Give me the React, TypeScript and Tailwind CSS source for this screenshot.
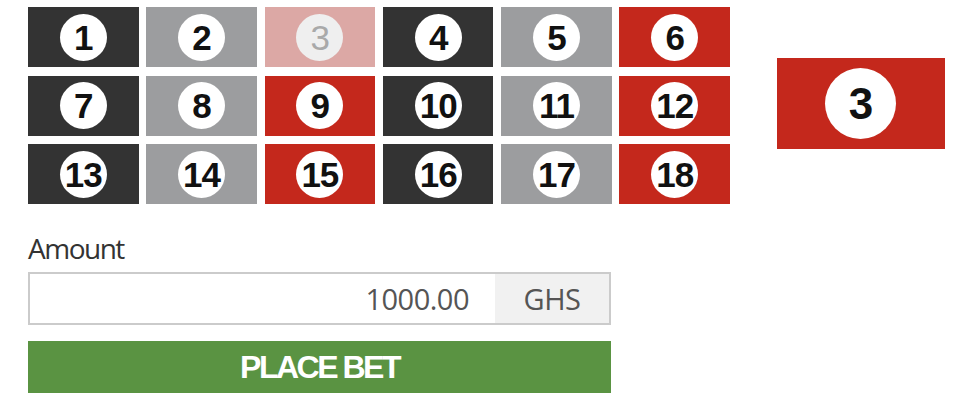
const tiles: { n: number; kind: "dark" | "grey" | "red" | "faded" }[] = [
  { n: 1, kind: "dark" },
  { n: 2, kind: "grey" },
  { n: 3, kind: "faded" },
  { n: 4, kind: "dark" },
  { n: 5, kind: "grey" },
  { n: 6, kind: "red" },
  { n: 7, kind: "dark" },
  { n: 8, kind: "grey" },
  { n: 9, kind: "red" },
  { n: 10, kind: "dark" },
  { n: 11, kind: "grey" },
  { n: 12, kind: "red" },
  { n: 13, kind: "dark" },
  { n: 14, kind: "grey" },
  { n: 15, kind: "red" },
  { n: 16, kind: "dark" },
  { n: 17, kind: "grey" },
  { n: 18, kind: "red" },
];

const tileBg = {
  dark: "bg-[#333333]",
  grey: "bg-[#9c9d9f]",
  red: "bg-[#c4281c]",
  faded: "bg-[#dca8a5]",
};

function Tile({ n, kind }: { n: number; kind: keyof typeof tileBg }) {
  const faded = kind === "faded";
  return (
    <button className={`flex h-[60px] items-center justify-center ${tileBg[kind]}`}>
      <span
        className={`flex h-[47px] w-[47px] items-center justify-center rounded-full text-[35px] font-bold leading-none tracking-[-1px] ${
          faded ? "bg-[#efefef] font-normal text-[#a9a9a9]" : "bg-white text-[#111]"
        }`}
      >
        {n}
      </span>
    </button>
  );
}

export default function App() {
  return (
    <div className="min-h-screen bg-white pl-[28px] pt-[7px] font-['Liberation_Sans',Arial,sans-serif]">
      <div className="flex items-center">
        <div className="grid grid-cols-[repeat(6,110.5px)] gap-x-[7.8px] gap-y-[8.5px]">
          {tiles.map((t) => (
            <Tile key={t.n} n={t.n} kind={t.kind} />
          ))}
        </div>
        <div className="mb-[4px] ml-[47px] flex h-[91px] w-[168px] items-center justify-center bg-[#c4281c]">
          <span className="flex h-[71px] w-[71px] items-center justify-center rounded-full bg-white text-[44px] font-bold leading-none text-[#111]">
            3
          </span>
        </div>
      </div>

      <div className="w-[583px]">
        <p className="mt-[28px] font-['Open_Sans',sans-serif] text-[28px] leading-[32px] tracking-[-1.5px] text-[#333]">
          Amount
        </p>
        <div className="mt-[8px] flex h-[53px] border-2 border-[#cbcbcb]">
          <div className="flex flex-1 items-center justify-end pr-[26px] font-['Open_Sans',sans-serif] text-[29px] tracking-[-0.5px] text-[#555]">
            1000.00
          </div>
          <div className="flex w-[114px] items-center justify-center bg-[#f1f1f1] font-['Open_Sans',sans-serif] text-[29px] tracking-[-0.5px] text-[#555]">
            GHS
          </div>
        </div>
        <button className="mt-[16px] flex h-[52px] w-full items-center justify-center bg-[#5a9342] text-[32px] font-bold tracking-[-2.5px] text-white">
          PLACE BET
        </button>
      </div>
    </div>
  );
}
